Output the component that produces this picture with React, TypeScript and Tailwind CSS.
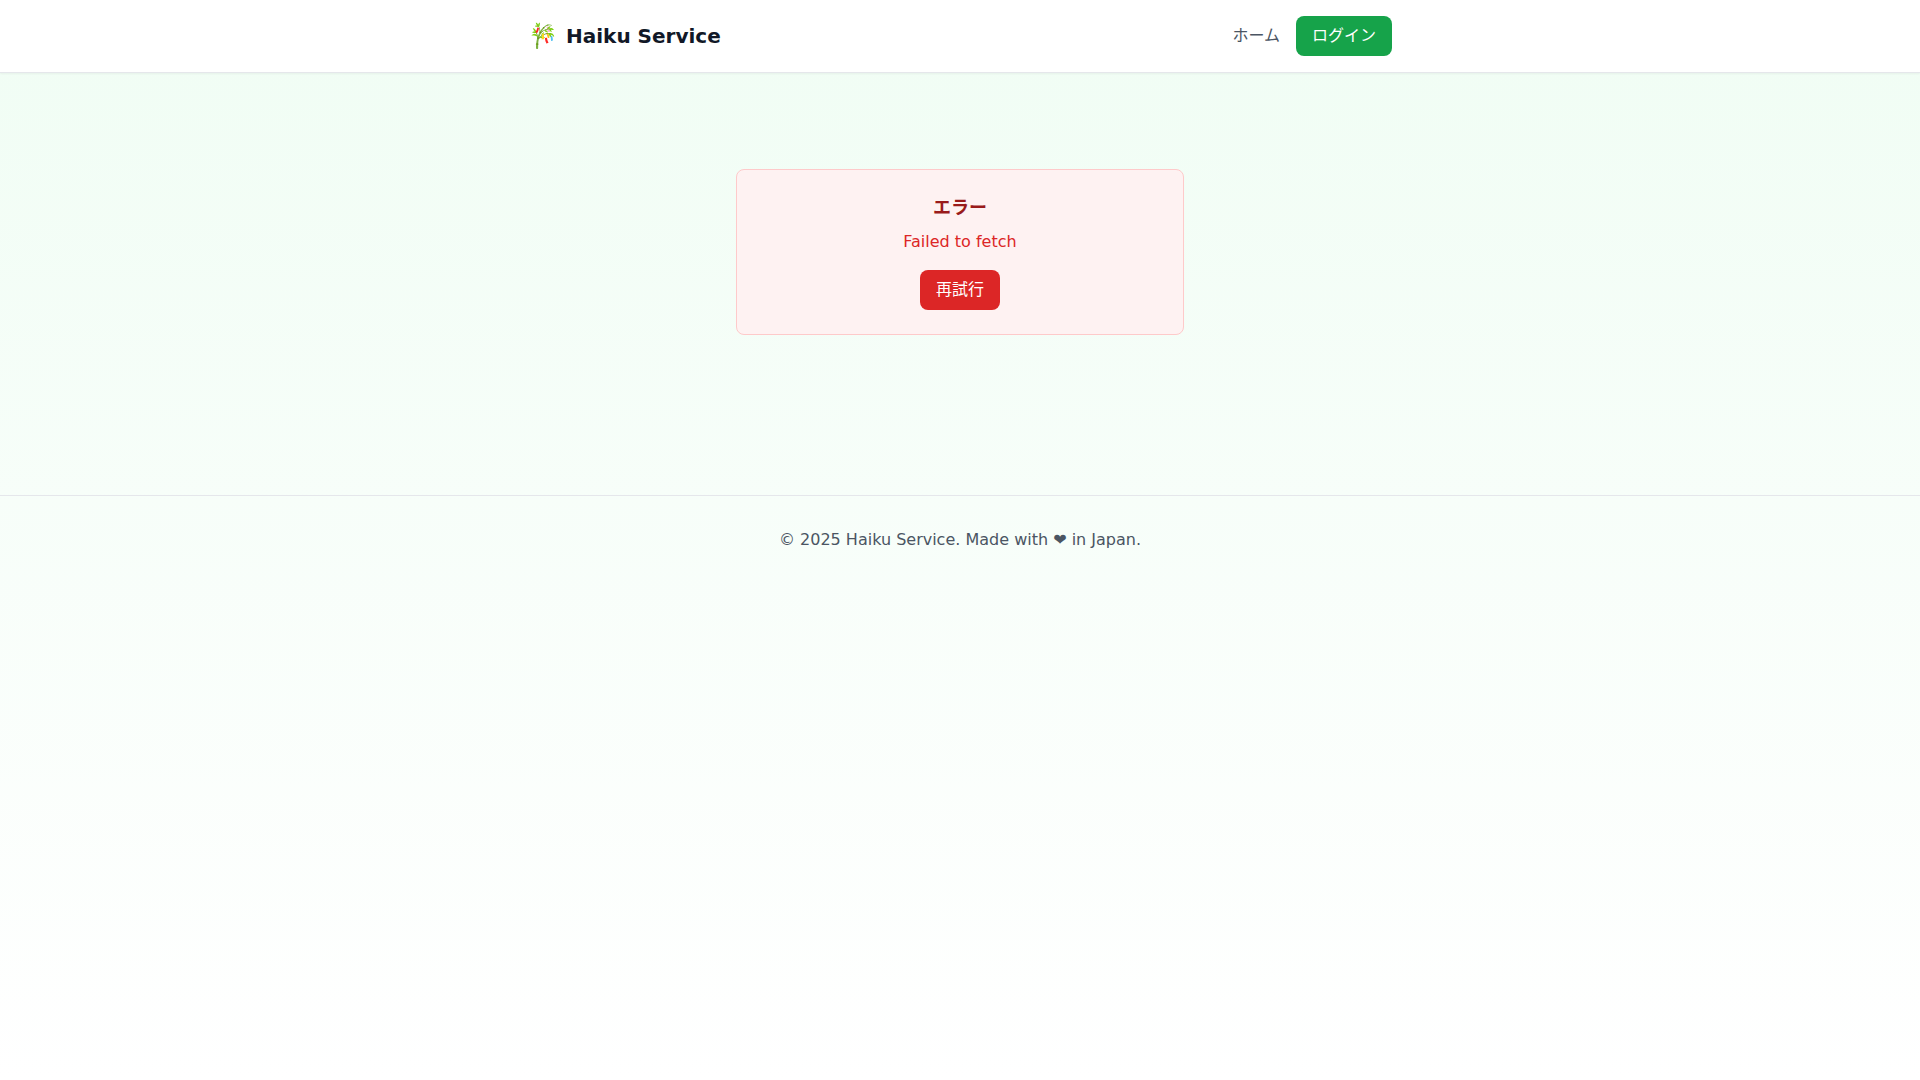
function Header() {
  return (
    <header className="bg-white border-b border-[#e5e7eb] shadow-xs">
      <nav className="max-w-4xl mx-auto px-4 py-4 flex items-center justify-between">
        <a href="/" className="flex items-center gap-2 text-[#111827]">
          <span className="text-2xl">🎋</span>
          <span className="text-xl font-bold">Haiku Service</span>
        </a>
        <div className="flex items-center gap-4">
          <a href="/" className="text-[#4b5563]">
            ホーム
          </a>
          <a
            href="/login"
            className="px-4 py-2 rounded-lg bg-[#16a34a] text-white"
          >
            ログイン
          </a>
        </div>
      </nav>
    </header>
  );
}

function ErrorCard({ message }: { message: string }) {
  return (
    <div className="max-w-md mx-auto p-6 text-center rounded-lg border border-[#fecaca] bg-[#fef2f2]">
      <h2 className="mb-2 text-lg font-bold text-[#991b1b]">エラー</h2>
      <p className="mb-4 text-[#dc2626]">{message}</p>
      <button
        type="button"
        className="px-4 py-2 rounded-lg bg-[#dc2626] text-white"
      >
        再試行
      </button>
    </div>
  );
}

function App() {
  return (
    <div className="min-h-screen bg-linear-to-b from-[#f0fdf4] to-white font-['DejaVu_Sans','Noto_Sans_CJK_JP',sans-serif]">
      <Header />
      <main className="max-w-4xl mx-auto px-4 py-8">
        <div className="py-16">
          <ErrorCard message="Failed to fetch" />
        </div>
      </main>
      <footer className="mt-16 py-8 border-t border-[#e5e7eb] text-center text-[#4b5563]">
        <p>© 2025 Haiku Service. Made with ❤ in Japan.</p>
      </footer>
    </div>
  );
}

export default App;
